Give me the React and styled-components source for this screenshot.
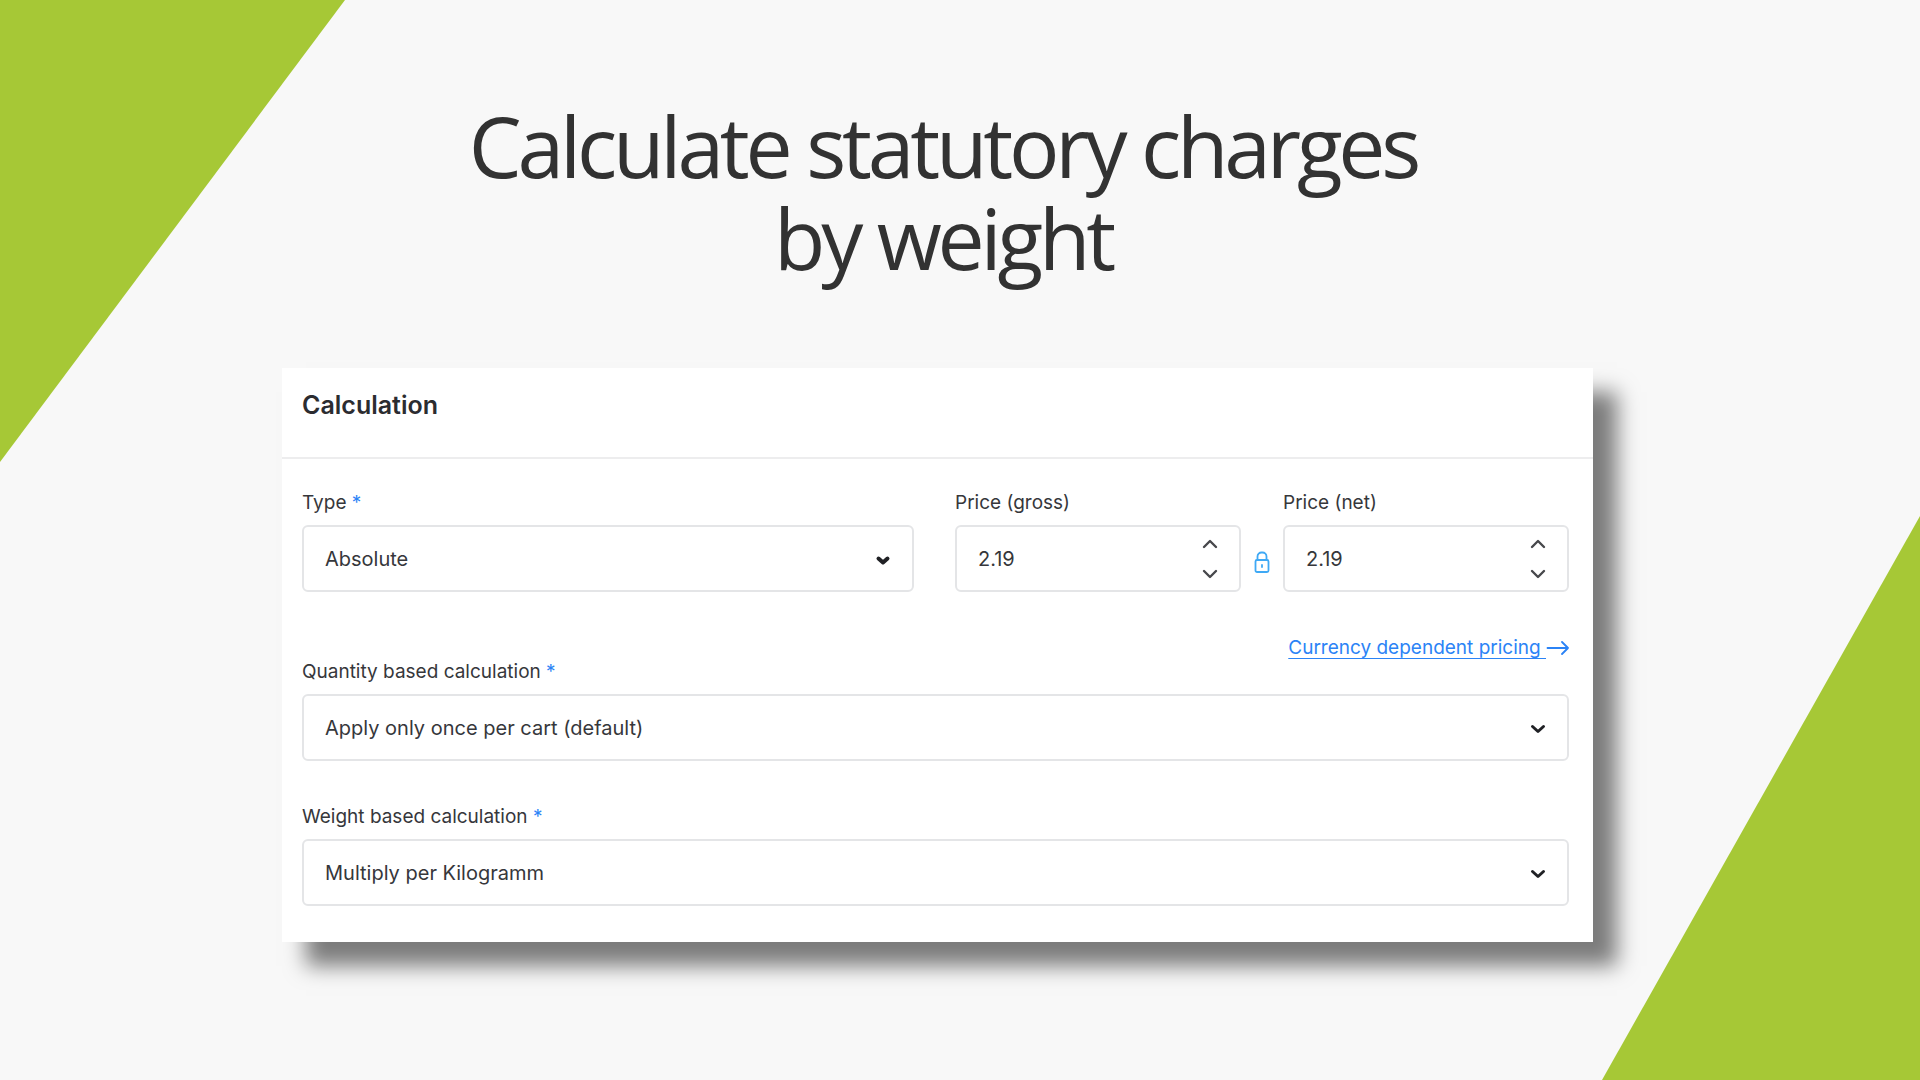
import React, { useState } from 'react';
import styled, { createGlobalStyle } from 'styled-components';

const GlobalStyle = createGlobalStyle`
  * {
    box-sizing: border-box;
  }

  body {
    margin: 0;
    background: #f8f8f8;
    font-family: Inter, 'Liberation Sans', sans-serif;
    color: #36373b;
  }
`;

const Page = styled.main`
  position: relative;
  min-height: 100vh;
  overflow: hidden;
  display: grid;
  grid-template-columns: 282fr 1311fr 327fr;
  align-content: start;
`;

const Corner = styled.div`
  position: absolute;
  background: #a6c836;
`;

const TopCorner = styled(Corner)`
  top: 0;
  left: 0;
  width: 345px;
  height: 462px;
  clip-path: polygon(0 0, 100% 0, 0 100%);
`;

const BottomCorner = styled(Corner)`
  right: 0;
  bottom: 0;
  width: 318px;
  height: 564px;
  clip-path: polygon(100% 0, 100% 100%, 0 100%);
`;

const Title = styled.h1`
  position: relative;
  grid-column: 1 / -1;
  margin: 0;
  padding: 100px 34px 84px 0;
  font-family: 'Open Sans', 'Noto Sans', sans-serif;
  font-size: 84px;
  line-height: 92px;
  font-weight: 400;
  letter-spacing: -0.05em;
  text-align: center;
  color: #323232;
`;

const Card = styled.section`
  position: relative;
  grid-column: 2;
  margin-bottom: 136px;
  background: #fff;
  box-shadow: 24px 24px 20px rgba(0, 0, 0, 0.5);
`;

const CardHeader = styled.header`
  height: 91px;
  padding: 20px 20px 0;
  border-bottom: 2px solid #ededee;
`;

const CardTitle = styled.h2`
  margin: 0;
  font-size: 25px;
  line-height: 34px;
  font-weight: 600;
  color: #2b2c30;
`;

const CardBody = styled.form`
  padding: 30px 24px 36px 20px;
`;

const PriceRow = styled.div`
  display: grid;
  grid-template-columns: 612fr 41px 286fr 42px 286fr;
  align-items: end;
`;

const LinkRow = styled.div`
  display: flex;
  justify-content: flex-end;
  margin-top: 46px;
`;

const Field = styled.div`
  min-width: 0;
  margin-top: ${({ $gap }) => $gap || 0}px;
`;

const Label = styled.label`
  display: block;
  margin-bottom: 8px;
  font-size: 19px;
  line-height: 28px;
`;

const Required = styled.span`
  color: #2b83f6;
`;

const Control = styled.div`
  position: relative;
  display: flex;
  height: 67px;
  border: 2px solid #e4e5e7;
  border-radius: 6px;
  background: #fff;
`;

const Select = styled.select`
  flex: 1;
  min-width: 0;
  padding: 0 60px 0 21px;
  border: 0;
  outline: 0;
  appearance: none;
  background: none;
  font: inherit;
  font-size: 20px;
  color: inherit;
`;

const SelectArrow = styled.svg`
  position: absolute;
  top: 25px;
  right: 21px;
  width: 16px;
  height: 16px;
  pointer-events: none;
`;

const NumberInput = styled.input`
  flex: 1;
  min-width: 0;
  padding: 0 0 0 21px;
  border: 0;
  outline: 0;
  background: none;
  font: inherit;
  font-size: 20px;
  color: inherit;
`;

const Stepper = styled.div`
  display: flex;
  flex-direction: column;
  justify-content: center;
  width: 58px;
`;

const StepButton = styled.button`
  display: flex;
  align-items: center;
  justify-content: center;
  height: 30px;
  padding: 0;
  border: 0;
  background: none;
  color: inherit;
`;

const LockButton = styled.button`
  display: flex;
  align-items: center;
  justify-content: center;
  height: 60px;
  padding: 0;
  border: 0;
  background: none;
  color: #3fa9f5;
`;

const PricingLink = styled.a`
  display: flex;
  align-items: center;
  font-size: 19px;
  line-height: 20px;
  white-space: pre;
  text-decoration: none;
  color: #2b83f6;
`;

const LinkText = styled.span`
  text-decoration: underline;
  text-decoration-thickness: 1px;
  text-underline-offset: 4px;
`;

const SelectField = ({ id, label, options, gap, heavy }) => (
  <Field $gap={gap}>
    <Label htmlFor={id}>
      {label} <Required>*</Required>
    </Label>
    <Control>
      <Select id={id} required>
        {options.map((option) => (
          <option key={option}>{option}</option>
        ))}
      </Select>
      <SelectArrow viewBox="0 0 16 16" fill="none" aria-hidden="true">
        <path
          d={heavy ? 'M3.5 6.5 8 10.5l4.5-4' : 'M2.5 5.5 8 10.5l5.5-5'}
          stroke="#202125"
          strokeWidth={heavy ? 4 : 3}
          strokeLinecap="round"
          strokeLinejoin="round"
        />
      </SelectArrow>
    </Control>
  </Field>
);

const StepIcon = ({ d }) => (
  <svg width="16" height="16" viewBox="0 0 16 16" fill="none" aria-hidden="true">
    <path
      d={d}
      stroke="#47484c"
      strokeWidth="2.4"
      strokeLinecap="round"
      strokeLinejoin="round"
    />
  </svg>
);

const PriceField = ({ id, label, value, onChange }) => {
  const step = (amount) => onChange((Number(value) + amount).toFixed(2));

  return (
    <Field>
      <Label htmlFor={id}>{label}</Label>
      <Control>
        <NumberInput
          id={id}
          inputMode="decimal"
          value={value}
          onChange={(e) => onChange(e.target.value)}
        />
        <Stepper>
          <StepButton type="button" aria-label="Increase" onClick={() => step(1)}>
            <StepIcon d="M2 11 8 5l6 6" />
          </StepButton>
          <StepButton type="button" aria-label="Decrease" onClick={() => step(-1)}>
            <StepIcon d="M2 5l6 6 6-6" />
          </StepButton>
        </Stepper>
      </Control>
    </Field>
  );
};

const App = () => {
  const [gross, setGross] = useState('2.19');
  const [net, setNet] = useState('2.19');

  return (
    <>
      <GlobalStyle />
      <Page>
        <TopCorner />
        <BottomCorner />
        <Title>
          Calculate statutory charges
          <br />
          by weight
        </Title>
        <Card>
          <CardHeader>
            <CardTitle>Calculation</CardTitle>
          </CardHeader>
          <CardBody>
            <PriceRow>
              <SelectField id="type" label="Type" options={['Absolute']} heavy />
              <span />
              <PriceField
                id="gross"
                label="Price (gross)"
                value={gross}
                onChange={setGross}
              />
              <LockButton type="button" aria-label="Link prices">
                <svg width="18" height="24" viewBox="0 0 18 24" fill="none">
                  <rect
                    x="2.5"
                    y="10"
                    width="13"
                    height="12"
                    rx="1.5"
                    stroke="currentColor"
                    strokeWidth="1.8"
                  />
                  <path
                    d="M4.5 10V6.5A4 4 0 0 1 8.5 2.5h1a4 4 0 0 1 4 4V10M9 15v2"
                    stroke="currentColor"
                    strokeWidth="1.8"
                    strokeLinecap="round"
                  />
                </svg>
              </LockButton>
              <PriceField
                id="net"
                label="Price (net)"
                value={net}
                onChange={setNet}
              />
            </PriceRow>
            <LinkRow>
              <PricingLink href="#pricing">
                <LinkText>Currency dependent pricing </LinkText>
                <svg width="23" height="16" viewBox="0 0 23 16" fill="none">
                  <path
                    d="M1.5 8H22M16 2l6 6-6 6"
                    stroke="currentColor"
                    strokeWidth="1.8"
                    strokeLinecap="round"
                    strokeLinejoin="round"
                  />
                </svg>
              </PricingLink>
            </LinkRow>
            <SelectField
              id="quantity"
              label="Quantity based calculation"
              options={['Apply only once per cart (default)']}
            />
            <SelectField
              id="weight"
              label="Weight based calculation"
              options={['Multiply per Kilogramm']}
              gap={42}
            />
          </CardBody>
        </Card>
      </Page>
    </>
  );
};

export default App;
